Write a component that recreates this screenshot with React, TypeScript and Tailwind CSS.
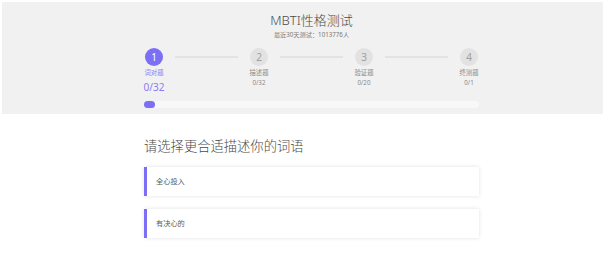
import React from "react";

const steps = [
  { n: "1", label: "词对题", count: "0/32", active: true },
  { n: "2", label: "描述题", count: "0/32", active: false },
  { n: "3", label: "验证题", count: "0/20", active: false },
  { n: "4", label: "终测题", count: "0/1", active: false },
];

function Step({ s }: { s: (typeof steps)[number] }) {
  return (
    <div className="w-[20px] flex flex-col items-center shrink-0">
      <div
        className={
          s.active
            ? "w-[18px] h-[18px] rounded-full bg-[#7d6ef6] text-white text-[10px] leading-[18px] text-center"
            : "w-[18px] h-[18px] rounded-full bg-[#e2e2e2] text-[#a0a0a0] text-[10px] leading-[18px] text-center"
        }
      >
        {s.n}
      </div>
      <div
        className={
          s.active
            ? "mt-[3px] text-[6.3px] leading-[8px] whitespace-nowrap text-[#8a7cf6]"
            : "mt-[3px] text-[6.3px] leading-[8px] whitespace-nowrap text-[#8a8a8a]"
        }
      >
        {s.label}
      </div>
      {s.active ? (
        <div className="mt-[4px] text-[10px] leading-[12px] whitespace-nowrap text-[#8a7cf6]">
          {s.count}
        </div>
      ) : (
        <div className="mt-[2px] text-[6.2px] leading-[8px] whitespace-nowrap text-[#8a8a8a]">
          {s.count}
        </div>
      )}
    </div>
  );
}

export default function App() {
  const font = {
    fontFamily: '"Noto Sans", "Noto Sans CJK SC", sans-serif',
  } as React.CSSProperties;
  return (
    <div className="min-h-[276px] bg-white" style={font}>
      <div className="mt-[2px] mx-[2px] bg-[#f1f1f1] pt-[9px] pb-[6px]">
        <div className="ml-[142px] w-[335px]">
          <div className="text-center text-[13px] leading-[18px] text-[#4a4a4a] font-light">
            MBTI性格测试
          </div>
          <div className="mt-[1px] text-center text-[6.2px] leading-[10px] text-[#7a7a7a]">
            最近30天测试：1013776人
          </div>
          <div className="mt-[8px] flex items-start">
            {steps.map((s, i) => (
              <React.Fragment key={s.n}>
                <Step s={s} />
                {i < steps.length - 1 && (
                  <div className="flex-1 mx-[11px] mt-[8px] h-[2px] bg-[#e3e3e3]" />
                )}
              </React.Fragment>
            ))}
          </div>
          <div className="mt-[8px] h-[7px] rounded-full bg-[#f8f8f8]">
            <div className="h-[7px] w-[11px] rounded-full bg-[#7d6ef6]" />
          </div>
        </div>
      </div>
      <div className="ml-[144px] w-[335px]">
        <div className="mt-[23px] text-[13.3px] leading-[18px] text-[#4a4a4a] font-light">
          请选择更合适描述你的词语
        </div>
        <div className="mt-[12px] flex flex-col gap-[13px]">
          {["全心投入", "有决心的"].map((t) => (
            <div
              key={t}
              className="h-[29px] flex items-center bg-white border-l-[3px] border-[#7d6ef6] pl-[9px] text-[7.2px] text-[#5a5a5a] shadow-[0_0_4px_rgba(0,0,0,0.12)]"
            >
              {t}
            </div>
          ))}
        </div>
      </div>
    </div>
  );
}
